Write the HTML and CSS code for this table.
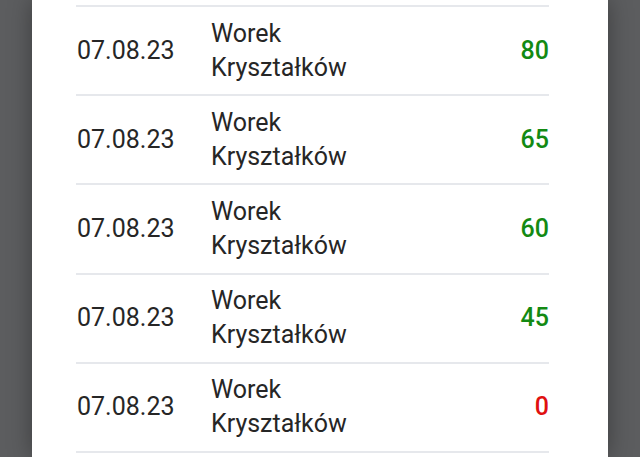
FILE: index.html
```html
<!DOCTYPE html>
<html lang="pl">
<head>
<meta charset="utf-8">
<link rel="stylesheet" href="styles.css">
</head>
<body>
<div class="card">
  <div class="list">
    <div class="row"><span class="date">07.08.23</span><span class="name">Worek<br>Kryształków</span><span class="val pos">80</span></div>
    <div class="row"><span class="date">07.08.23</span><span class="name">Worek<br>Kryształków</span><span class="val pos">65</span></div>
    <div class="row"><span class="date">07.08.23</span><span class="name">Worek<br>Kryształków</span><span class="val pos">60</span></div>
    <div class="row"><span class="date">07.08.23</span><span class="name">Worek<br>Kryształków</span><span class="val pos">45</span></div>
    <div class="row"><span class="date">07.08.23</span><span class="name">Worek<br>Kryształków</span><span class="val neg">0</span></div>
    <div class="end"></div>
  </div>
</div>
</body>
</html>
```

FILE: styles.css
```css
html, body {
  margin: 0;
  height: 100%;
  overflow: hidden;
}
body {
  background: #5c5d5f;
  font-family: Roboto, "Noto Sans", sans-serif;
  color: #262626;
}
.card {
  margin: 0 32px;
  height: 100%;
  background: #ffffff;
  box-shadow: 0 0 22px rgba(0, 0, 0, 0.35);
  padding: 5px 59px 0 44px;
  box-sizing: border-box;
}
.row {
  display: grid;
  grid-template-columns: 135px 1fr auto;
  align-items: center;
  border-top: 2px solid #e6e8ec;
  padding: 9.6px 0;
  height: 68px;
  font-size: 25px;
  line-height: 34px;
}
.end {
  border-top: 2px solid #e6e8ec;
}
.date {
  padding-left: 1px;
}
.val {
  font-weight: 500;
}
.pos { color: #138a13; }
.neg { color: #e01010; }
```
